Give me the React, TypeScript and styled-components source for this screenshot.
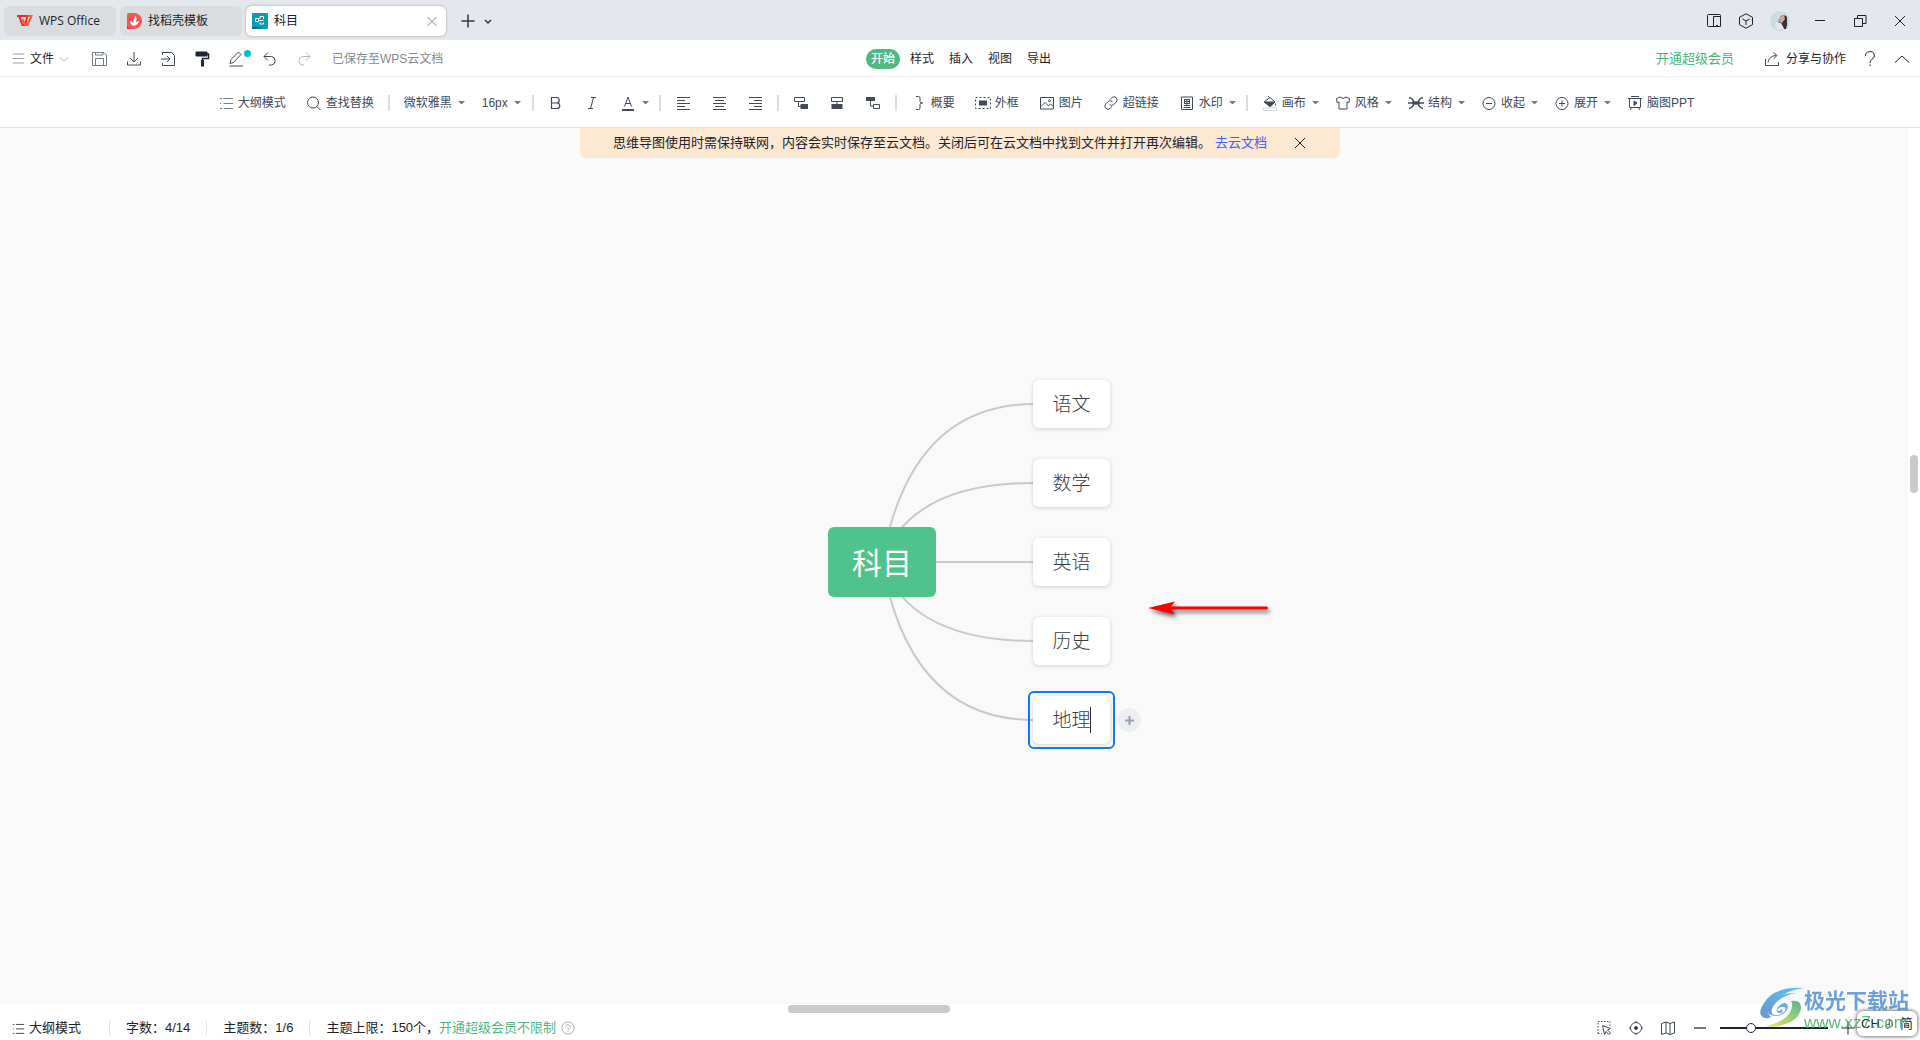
import React from 'react';
import styled, { createGlobalStyle, css } from 'styled-components';

const latin = '"Liberation Sans", "Noto Sans CJK SC", sans-serif';
const ui = '"Open Sans", "Noto Sans CJK SC", sans-serif';

const Global = createGlobalStyle`
  *, *::before, *::after { box-sizing: border-box; }
  body { margin: 0; font-family: ${latin}; font-size: 12px; line-height: 16px; color: #1f2329; background: #fff; overflow: hidden; }
  button, input, select { font: inherit; color: inherit; border: 0; padding: 0; margin: 0; background: none; outline: 0; }
  a { text-decoration: none; }
  svg { display: block; flex: none; }
`;

const Page = styled.div`
  display: flex;
  flex-direction: column;
  height: 100vh;
`;

/* ---------- title bar ---------- */
const TitleBar = styled.header`
  display: flex;
  align-items: center;
  justify-content: space-between;
  height: 40px;
  padding: 2px 12px 0 4px;
  background: #e4e7eb;
  font-family: ${ui};
`;
const Tabs = styled.nav`
  display: flex;
  align-items: center;
  gap: 4px;
`;
const Tab = styled.div<{ $w: number; $active?: boolean; $pad: number }>`
  display: flex;
  align-items: center;
  gap: 6px;
  width: ${p => p.$w}px;
  height: 30px;
  padding: 0 ${p => p.$pad}px;
  border-radius: 6px;
  background: ${p => (p.$active ? '#fff' : '#d9dddf')};
  box-shadow: ${p => (p.$active ? '0 0 3px rgba(0, 0, 0, 0.3)' : 'none')};
`;
const TabLabel = styled.button`
  display: flex;
  align-items: center;
  flex: 1;
  gap: 6px;
  white-space: nowrap;
`;
const IconButton = styled.button<{ $size?: number }>`
  display: flex;
  align-items: center;
  justify-content: center;
  position: relative;
  width: ${p => p.$size ?? 16}px;
  height: ${p => p.$size ?? 16}px;
`;
const TabTools = styled.div`
  display: flex;
  align-items: center;
  gap: 4px;
  padding-left: 10px;
`;
const WindowTools = styled.div<{ $gap: number }>`
  display: flex;
  align-items: center;
  gap: ${p => p.$gap}px;
`;
const WindowGroup = styled.div`
  display: flex;
  align-items: center;
  gap: 22px;
`;

/* ---------- menu row ---------- */
const MenuRow = styled.div`
  display: grid;
  grid-template-columns: 1fr auto 1fr;
  align-items: center;
  height: 37px;
  padding: 1px 10px 0 12px;
  border-bottom: 1px solid #f0f0f0;
`;
const FileButton = styled.button`
  display: flex;
  align-items: center;
  gap: 5px;
  margin-right: 23px;
`;
const MenuLeft = styled.div`
  display: flex;
  align-items: center;
`;
const QuickTools = styled.div`
  display: flex;
  gap: 18px;
  margin-right: 20px;
`;
const SavedNote = styled.span`
  color: #85888d;
`;
const MenuTabs = styled.nav`
  display: flex;
  gap: 5px;
`;
const MenuTab = styled.button<{ $on?: boolean }>`
  height: 20px;
  padding: 0 5px;
  border-radius: 10px;
  ${p => p.$on && css`
    background: #4fb883;
    color: #fff;
    font-weight: 500;
  `}
`;
const MenuRight = styled.div`
  display: flex;
  align-items: center;
  justify-content: flex-end;
  gap: 16px;
`;
const VipLink = styled.a`
  margin-right: 14px;
  font-size: 13px;
  color: #47b57c;
`;
const ShareButton = styled.button`
  display: flex;
  align-items: center;
  gap: 6px;
`;
const PenBadge = styled.span`
  position: absolute;
  right: -7px;
  top: -1px;
  width: 7px;
  height: 7px;
  border-radius: 50%;
  background: #00bfc0;
`;

/* ---------- tool bar ---------- */
const ToolBar = styled.div`
  display: flex;
  align-items: center;
  justify-content: center;
  height: 51px;
  padding: 1px 8px 0 0;
  border-bottom: 1px solid #e2e3e5;
  color: #414a5a;
  white-space: nowrap;
`;
const Tool = styled.button<{ $menu?: boolean }>`
  display: flex;
  align-items: center;
  gap: 4px;
  height: 24px;
  padding: 0 ${p => (p.$menu ? 6 : 10)}px 0 10px;
`;
const CaretMark = styled.span`
  width: 7px;
  margin-left: 2px;
  border: solid transparent;
  border-width: 3px 3px 0;
  border-top-color: #737b87;
`;
const Divider = styled.span`
  width: 2px;
  height: 16px;
  margin: 0 4px;
  background: #dcdde0;
`;
const SelectBox = styled.label<{ $w: number }>`
  display: flex;
  align-items: center;
  gap: 4px;
  padding: 0 7px 0 10px;
  select {
    width: ${p => p.$w}px;
    appearance: none;
  }
`;

/* ---------- canvas ---------- */
const CanvasRow = styled.main`
  display: flex;
  flex: 1;
  min-height: 0;
`;
const Canvas = styled.section`
  position: relative;
  display: flex;
  flex: 1;
  align-items: center;
  justify-content: center;
  padding: 0 0 8px 30px;
  background: #f9f9f9;
`;
const VerticalGutter = styled.div`
  display: flex;
  justify-content: flex-end;
  align-items: flex-start;
  width: 12px;
  padding: 327px 2px 0 0;
`;
const Thumb = styled.span<{ $w: number; $h: number }>`
  width: ${p => p.$w}px;
  height: ${p => p.$h}px;
  border-radius: 4px;
  background: #cacaca;
`;
const Banner = styled.div`
  position: absolute;
  top: 0;
  left: calc(50% - 374px);
  display: flex;
  align-items: center;
  width: 760px;
  height: 30px;
  padding: 0 33px;
  border-radius: 0 0 5px 5px;
  background: #fde8d1;
  font-size: 13px;
  white-space: nowrap;
  a { margin: 0 25px 0 4px; color: #3b63f5; }
`;
const MindMap = styled.div`
  position: relative;
  display: flex;
  align-items: center;
  gap: 97px;
`;
const RootNode = styled.div`
  position: relative;
  display: flex;
  align-items: center;
  justify-content: center;
  width: 108px;
  height: 70px;
  padding-top: 4px;
  border-radius: 6px;
  background: #50c28b;
  color: #fff;
  font-size: 30px;
  line-height: 40px;
`;
const Branches = styled.ul`
  position: relative;
  display: flex;
  flex-direction: column;
  gap: 31px;
  margin: 0;
  padding: 0;
  list-style: none;
`;
const Node = styled.li<{ $selected?: boolean }>`
  position: relative;
  display: flex;
  align-items: center;
  justify-content: center;
  width: 77px;
  height: 48px;
  padding-top: 2px;
  border-radius: 6px;
  background: #fff;
  box-shadow: 0 1px 4px rgba(0, 0, 0, 0.16);
  color: #3a3d42;
  font-size: 19px;
  line-height: 28px;
  font-weight: 300;
  ${p => p.$selected && css`
    &::before {
      content: '';
      position: absolute;
      inset: -5px;
      border: 2px solid #0b7cf0;
      border-radius: 6px;
    }
  `}
`;
const NodeInput = styled.input`
  width: 38px;
  height: 28px;
`;
const TextCursor = styled.span`
  position: absolute;
  left: 57px;
  top: 11px;
  width: 1px;
  height: 26px;
  background: #333;
`;
const AddChild = styled.button`
  position: absolute;
  left: 84px;
  top: 12px;
  display: flex;
  align-items: center;
  justify-content: center;
  width: 24px;
  height: 24px;
  border-radius: 50%;
  background: #edeef3;
  color: #98a1b5;
`;
const Links = styled.svg`
  position: absolute;
  left: 0;
  top: 0;
`;
const Pointer = styled.svg`
  position: absolute;
  left: 316px;
  top: 216px;
  filter: drop-shadow(2px 3px 2px rgba(0, 0, 0, 0.6));
`;

/* ---------- footer ---------- */
const Footer = styled.footer`
  position: relative;
  display: flex;
  flex-direction: column;
  align-items: center;
  height: 36px;
  padding-top: 1px;
`;
const HorizontalThumb = styled(Thumb)`
  flex: none;
  margin-right: 182px;
`;
const StatusRow = styled.div`
  display: flex;
  align-items: center;
  justify-content: space-between;
  width: 100%;
  height: 26px;
  margin-top: 3px;
  padding: 0 64px 0 12px;
  font-size: 13px;
`;
const Status = styled.div`
  display: flex;
  align-items: center;
`;
const StatusItem = styled.span<{ $first?: boolean }>`
  display: flex;
  align-items: center;
  padding: 0 ${p => (p.$first ? 28 : 16)}px 0 ${p => (p.$first ? 0 : 16)}px;
  & + & { border-left: 1px solid #e0e1e3; line-height: 14px; }
  a { color: #4fb883; }
  a + button { margin-left: 4px; }
`;
const OutlineButton = styled.button`
  display: flex;
  align-items: center;
  gap: 4px;
`;
const ViewTools = styled.div`
  display: flex;
  align-items: center;
  gap: 16px;
`;
const ZoomTools = styled.div`
  display: flex;
  align-items: center;
  gap: 12px;
`;
const ZoomSlider = styled.input`
  appearance: none;
  width: 108px;
  height: 12px;
  background: linear-gradient(#1c2433, #1c2433) center / 100% 2px no-repeat;
  &::-webkit-slider-thumb {
    appearance: none;
    width: 10px;
    height: 10px;
    border: 1px solid #1c2433;
    border-radius: 50%;
    background: #fff;
  }
`;
const InputMethod = styled.div`
  position: absolute;
  right: 3px;
  bottom: 4px;
  display: flex;
  align-items: center;
  justify-content: center;
  gap: 4px;
  width: 60px;
  height: 25px;
  border-radius: 6px;
  background: #fff;
  box-shadow: 0 0 4px rgba(0, 0, 0, 0.8);
  font-size: 13px;
  color: #222;
`;
const Watermark = styled.div`
  position: absolute;
  right: 11px;
  bottom: 6px;
  display: flex;
  align-items: flex-start;
  opacity: 0.85;
`;
const WatermarkText = styled.div`
  display: flex;
  flex-direction: column;
  padding-top: 4px;
  color: #5591d0;
  font-size: 21px;
  line-height: 22px;
  font-weight: 700;
  white-space: nowrap;
`;
const WatermarkSite = styled.span`
  color: #45ae62;
  font-size: 17px;
  line-height: 22px;
  font-weight: 400;
`;

/* ---------- drawings ---------- */
type IconProps = { children: React.ReactNode; s?: number; w?: number; c?: string };
const Icon = ({ children, s = 16, w = 1, c = 'currentColor' }: IconProps) => (
  <svg width={s} height={s} viewBox="0 0 16 16" fill="none" stroke={c} strokeWidth={w} aria-hidden="true">
    {children}
  </svg>
);

const ListIcon = () => (
  <Icon c="#737b87"><path d="M5.5 3.5H15M5.5 8.5H15M5.5 13.5H15" /><path d="M2 3.5h2M2 8.5h1M2 13.5h2" /></Icon>
);
const alignPath = {
  left: 'M2 2.500h13M2 5.500h8M2 8.500h13M2 11.500h8M2 14.500h13',
  center: 'M2 2.500h13M4 5.500h9M2 8.500h13M4 11.500h9M2 14.500h13',
  right: 'M2 2.500h13M7 5.500h8M2 8.500h13M7 11.500h8M2 14.500h13',
};

type ToolSpec = { label: string; text?: string; menu?: boolean; icon: React.ReactNode };

const textTools: ToolSpec[] = [
  { label: '加粗', icon: <Icon w={1.2}><path d="M3.500 2.500h5a2.500 2.500 0 0 1 0 5.500h-5zM3.500 8h5.500a2.700 2.700 0 0 1 0 5.500H3.500z" /></Icon> },
  { label: '斜体', icon: <Icon><path d="M7 2.500h5M4 13.500h5M9.500 2.500l-3 11" /></Icon> },
  { label: '字体颜色', menu: true, icon: <Icon><path d="M4.500 11.500L8 2l3.500 9.500M5.700 8.500h4.600" /><path d="M2 15h12" strokeWidth="2" /></Icon> },
];
const alignTools: ToolSpec[] = [
  { label: '左对齐', icon: <Icon><path d={alignPath.left} /></Icon> },
  { label: '居中对齐', icon: <Icon><path d={alignPath.center} /></Icon> },
  { label: '右对齐', icon: <Icon><path d={alignPath.right} /></Icon> },
];
const topicTools: ToolSpec[] = [
  { label: '插入子主题', icon: <Icon><path d="M1.500 2.500h10v4h-10zM5.500 6.500v5H8" /><rect x="8" y="9.500" width="6.500" height="4" fill="currentColor" /></Icon> },
  { label: '插入同级主题', icon: <Icon><path d="M2.500 2.500h11v4h-11zM8 6.500v3" /><rect x="3" y="9.500" width="10" height="4" fill="currentColor" /></Icon> },
  { label: '插入父主题', icon: <Icon><rect x="1.500" y="2.500" width="8" height="3" fill="currentColor" /><path d="M5.500 6v5H8M8.500 9.500h6v4h-6z" /></Icon> },
];
const insertTools: ToolSpec[] = [
  { label: '概要', text: '概要', icon: <Icon><path d="M5 1.500h2.500q1.500 0 1.500 1.500v3.500q0 1.500 2.500 1.500-2.500 0-2.500 1.500V13q0 1.500-1.500 1.500H5" /></Icon> },
  { label: '外框', text: '外框', icon: <Icon><path d="M.5 2.500h15v11H.5z" strokeDasharray="2 2" /><rect x="4.500" y="6" width="7" height="4" fill="currentColor" /></Icon> },
  { label: '图片', text: '图片', icon: <Icon><path d="M1.500 2.500h13v11.500h-13z" /><path d="M2 11.500l4-4 3.500 3.500 2-2 3 2.500" /><circle cx="10.500" cy="5.700" r="1" /></Icon> },
  { label: '超链接', text: '超链接', icon: <Icon><path d="M7 4.500l1.800-1.800a3.100 3.100 0 0 1 4.400 4.400L10.800 9.500a3 3 0 0 1-4.200 0" /><path d="M9 11.500l-1.800 1.800a3.100 3.100 0 0 1-4.400-4.400L5.200 6.500a3 3 0 0 1 4.200 0" /></Icon> },
  { label: '水印', text: '水印', menu: true, icon: <Icon><path d="M2.500 2h11v12.500h-11z" /><path d="M5 4.500h6M5 6.500h6M5 8.500h6M5 10.500h6M4.500 12.500h7M8 4.500v6M5.500 4.500v4M10.500 4.500v4" /></Icon> },
];
const styleTools: ToolSpec[] = [
  { label: '画布', text: '画布', menu: true, icon: <Icon><path d="M2.500 6.500L8 2.500l5 4.500-5 4.500z" /><path d="M2 7h11L8 11.500z" fill="currentColor" /><path d="M6 1l2 2M13.500 8.500v2" /><rect x="1.500" y="13" width="13" height="2.500" stroke="#d5d9e0" /></Icon> },
  { label: '风格', text: '风格', menu: true, icon: <Icon><path d="M5 2L1.500 3.500 2 7.500l2-.5v7h8V7l2 .5.5-4L11 2Q8 5 5 2z" /></Icon> },
  { label: '结构', text: '结构', menu: true, icon: <Icon w={1.3}><path d="M1 2.500q4 1 5 5M15 2.500q-4 1-5 5M1 13.500q4-1 5-5M15 13.500q-4-1-5-5M0 8h16" /><rect x="5" y="7" width="6" height="2" fill="currentColor" /></Icon> },
  { label: '收起', text: '收起', menu: true, icon: <Icon><circle cx="8" cy="8.500" r="6" /><path d="M5 8.500h6" /></Icon> },
  { label: '展开', text: '展开', menu: true, icon: <Icon><circle cx="8" cy="8.500" r="6" /><path d="M5 8.500h6M8 5.500v6" /></Icon> },
  { label: '脑图PPT', text: '脑图PPT', icon: <Icon><path d="M4 1.500h8M1 3.500h14M2.500 3.500v9h11v-9M4.500 12.500L3 15M11.500 12.500L13 15" /><path d="M7 6l3 2-3 2.500z" fill="currentColor" /></Icon> },
];

const ToolSet = ({ tools }: { tools: ToolSpec[] }) => (
  <>
    {tools.map(t => (
      <Tool key={t.label} $menu={t.menu} aria-label={t.label}>
        {t.icon}
        {t.text}
        {t.menu && <CaretMark />}
      </Tool>
    ))}
  </>
);

const PlusIcon = ({ s = 16, w = 1 }: { s?: number; w?: number }) => <Icon s={s} w={w}><path d="M8 1.500v13M1.500 8h13" /></Icon>;
const CloseIcon = () => <Icon><path d="M3 3l10 10M13 3L3 13" /></Icon>;

const subjects = ['语文', '数学', '英语', '历史'];

export default function App() {
  return (
    <Page>
      <Global />
      <TitleBar>
        <Tabs>
          <Tab $w={112} $pad={13}>
            <TabLabel>
              <svg width="16" height="12" viewBox="0 0 16 12" fill="none" strokeWidth="2">
                <path d="M0 1h10.500L8 10H5.500L2 1" stroke="#f0282d" />
                <path d="M5.500 4L8 10h2.500L14.500 1H11" stroke="#fa5a32" />
              </svg>
              WPS Office
            </TabLabel>
          </Tab>
          <Tab $w={122} $pad={7}>
            <TabLabel>
              <svg width="15" height="16" viewBox="0 0 15 16">
                <path d="M0 2q0-2 2-2h5a8 8 0 0 1 0 16H2q-2 0-2-2z" fill="#f25658" />
                <path d="M0 13l2.500 3H0z" fill="#b92e35" />
                <path d="M6.500 13Q3 11.500 3.200 7.500q2.300.8 3 3Q6 6 8.500 3q2 3 0 6.500 1.500-1.500 3.500-1.500-.8 4-5.500 5z" fill="#fff" />
              </svg>
              找稻壳模板
            </TabLabel>
          </Tab>
          <Tab $w={200} $pad={6} $active>
            <TabLabel>
              <svg width="16" height="16" viewBox="0 0 16 16" fill="none">
                <rect width="16" height="16" rx="1" fill="#0a9bb0" />
                <path d="M0 14h8l2 2H0z" fill="#08758a" />
                <path d="M3.500 5.500h3v3h-3zM6.500 7.500H11.500M8 3.500H11.500V6M8 3.500V6M8 9.500v1.500h3.500V9.500" stroke="#fff" />
              </svg>
              科目
            </TabLabel>
            <IconButton aria-label="关闭标签"><Icon c="#8b8e92"><path d="M3.500 4l9 9M12.500 4l-9 9" /></Icon></IconButton>
          </Tab>
          <TabTools>
            <IconButton aria-label="新建标签"><Icon w={1.5} c="#33373c"><path d="M8 1.500v13M1.500 8h13" /></Icon></IconButton>
            <IconButton aria-label="标签列表"><Icon w={1.5} c="#33373c"><path d="M5 7l3 3 3-3" /></Icon></IconButton>
          </TabTools>
        </Tabs>
        <WindowGroup>
          <WindowTools $gap={16}>
            <IconButton aria-label="侧栏"><Icon><path d="M2.500 1.500h11a1 1 0 0 1 1 1v11h-12a1 1 0 0 1-1-1v-10a1 1 0 0 1 1-1zM7.500 14V3.500h7M10 12.500h2" /></Icon></IconButton>
            <IconButton aria-label="应用"><Icon><path d="M8 .8l6.500 3.500v7.400L8 15.200l-6.500-3.500V4.300zM4.500 6L8 8l3.500-2M8 8v4" /></Icon></IconButton>
            <IconButton $size={20} aria-label="账号">
              <svg width="20" height="20" viewBox="0 0 20 20">
                <circle cx="10" cy="10" r="10" fill="#cbdbdf" />
                <path d="M11 5q4-2 6 1l0 8-1 4h-2l-2-4-4-1 1-4z" fill="#35303c" />
                <path d="M10 6l4-2 1 4-3 4-3-1z" fill="#d4a49e" />
                <path d="M6 11l5 1 3 6-6 1-3-3z" fill="#e3e8ea" />
              </svg>
            </IconButton>
          </WindowTools>
          <WindowTools $gap={24}>
            <IconButton aria-label="最小化"><Icon><path d="M3 7.500h10" /></Icon></IconButton>
            <IconButton aria-label="还原"><Icon><path d="M2.500 5.500h8v8h-8zM5.500 5V2.500h8.500v8h-3" /></Icon></IconButton>
            <IconButton aria-label="关闭窗口"><CloseIcon /></IconButton>
          </WindowTools>
        </WindowGroup>
      </TitleBar>

      <MenuRow>
        <MenuLeft>
          <FileButton>
            <Icon s={13} c="#85898f"><path d="M1 2.500h14M1 8h14M1 13.500h14" /></Icon>
            文件
            <Icon s={10} c="#85898f"><path d="M1 5l7 7 7-7" /></Icon>
          </FileButton>
          <QuickTools>
            <IconButton aria-label="保存"><Icon c="#737b87"><path d="M.5 1.500h11.500l2.500 2.500v10.500H.5zM3.500 14V7.500h8V14M3.500 1.500V4h7.500V1.500" /></Icon></IconButton>
            <IconButton aria-label="下载"><Icon c="#414a5a"><path d="M8 1v10M4 7l4 4 4-4M1.500 10.500v3.500h13v-3.500" /></Icon></IconButton>
            <IconButton aria-label="导入"><Icon c="#414a5a"><path d="M2.500 4V1.500h9l3 3v10h-12V12M1 8h8.500M7 5l3 3-3 3" /></Icon></IconButton>
            <IconButton aria-label="格式刷"><Icon c="#1f2733"><path d="M2 1h11v4H2z" fill="#1f2733" /><path d="M13 3h1.500v4.500H8.500V15" strokeWidth="1.500" /><path d="M8.500 9v6.500" strokeWidth="3" /></Icon></IconButton>
            <IconButton aria-label="画笔">
              <Icon c="#414a5a"><path d="M2 12.500l1-4L10.500 1l2.500 2.500-7.500 8zM1.500 15h13.500" /></Icon>
              <PenBadge />
            </IconButton>
            <IconButton aria-label="撤销"><Icon c="#414a5a"><path d="M6 1.500L2 5.500l4 4M2 5.500h7.500a4.300 4.300 0 0 1 0 8.500H7" /></Icon></IconButton>
            <IconButton aria-label="重做"><Icon c="#b5b8bd"><path d="M10 1.500l4 4-4 4M14 5.500H6.500a4.300 4.300 0 0 0 0 8.500H8" /></Icon></IconButton>
          </QuickTools>
          <SavedNote>已保存至WPS云文档</SavedNote>
        </MenuLeft>
        <MenuTabs>
          <MenuTab $on>开始</MenuTab>
          <MenuTab>样式</MenuTab>
          <MenuTab>插入</MenuTab>
          <MenuTab>视图</MenuTab>
          <MenuTab>导出</MenuTab>
        </MenuTabs>
        <MenuRight>
          <VipLink href="#vip">开通超级会员</VipLink>
          <ShareButton>
            <Icon c="#414a5a"><path d="M1.500 8v6.500h13V11M4 11.500Q5 5 12 4.500M9.500 1.500l3.500 3-3.500 3.500" /></Icon>
            分享与协作
          </ShareButton>
          <IconButton aria-label="帮助"><Icon><path d="M3.500 5a4.500 4 0 1 1 6.500 3.200Q8 9.500 8 12M8 13.500V15" /></Icon></IconButton>
          <IconButton aria-label="收起功能区"><Icon><path d="M1 11.500L8 5l7 6.500" /></Icon></IconButton>
        </MenuRight>
      </MenuRow>

      <ToolBar>
        <Tool><ListIcon />大纲模式</Tool>
        <Tool><Icon><circle cx="7" cy="7.500" r="5.500" /><path d="M11 11.500l3.500 3.500" /></Icon>查找替换</Tool>
        <Divider />
        <SelectBox $w={48}>
          <select aria-label="字体"><option>微软雅黑</option></select>
          <CaretMark />
        </SelectBox>
        <SelectBox $w={26}>
          <select aria-label="字号"><option>16px</option></select>
          <CaretMark />
        </SelectBox>
        <Divider />
        <ToolSet tools={textTools} />
        <Divider />
        <ToolSet tools={alignTools} />
        <Divider />
        <ToolSet tools={topicTools} />
        <Divider />
        <ToolSet tools={insertTools} />
        <Divider />
        <ToolSet tools={styleTools} />
      </ToolBar>

      <CanvasRow>
        <Canvas>
          <Banner>
            思维导图使用时需保持联网，内容会实时保存至云文档。关闭后可在云文档中找到文件并打开再次编辑。
            <a href="#cloud">去云文档</a>
            <IconButton aria-label="关闭提示"><CloseIcon /></IconButton>
          </Banner>
          <MindMap>
            <Links width="282" height="364" viewBox="0 0 282 364" fill="none" stroke="#cacaca" strokeWidth="2">
              {[24, 103, 182, 261, 340].map(y => <path key={y} d={`M54 182Q82 ${y} 206 ${y}`} />)}
            </Links>
            <RootNode>科目</RootNode>
            <Branches>
              {subjects.map(s => <Node key={s}>{s}</Node>)}
              <Node $selected>
                <NodeInput aria-label="主题" defaultValue="地理" />
                <TextCursor />
                <AddChild aria-label="添加子主题"><PlusIcon s={11} w={3} /></AddChild>
              </Node>
            </Branches>
            <Pointer width="130" height="24" viewBox="0 0 130 24">
              <path d="M4 12L31 5.500l-4 5h96q2 1.500 0 3H27l4 5z" fill="#f00" />
            </Pointer>
          </MindMap>
        </Canvas>
        <VerticalGutter><Thumb $w={8} $h={38} /></VerticalGutter>
      </CanvasRow>

      <Footer>
        <HorizontalThumb $w={162} $h={8} />
        <StatusRow>
          <Status>
            <StatusItem $first>
              <OutlineButton>
                <Icon s={13}><path d="M5 3H15M5 8.500H15M5 14H15M1 3h2M1 8.500h1M1 14h2" /></Icon>
                大纲模式
              </OutlineButton>
            </StatusItem>
            <StatusItem>字数：4/14</StatusItem>
            <StatusItem>主题数：1/6</StatusItem>
            <StatusItem>
              主题上限：150个，<a href="#vip">开通超级会员不限制</a>
              <IconButton aria-label="说明"><Icon s={14} c="#9da2ab"><circle cx="8" cy="8" r="7" /><path d="M5.700 6.500a2.300 2.300 0 1 1 3.500 2Q8 9 8 10M8 11v1.500" /></Icon></IconButton>
            </StatusItem>
          </Status>
          <ViewTools>
            <IconButton aria-label="框选"><Icon c="#414a5a"><path d="M2 13.500V1.500h12V6M2 13.500h4" strokeDasharray="1.500 1.500" /><path d="M6.500 5.500l8 3-3 1.500 3 3-1.500 1.500-3-3-1.500 3z" /></Icon></IconButton>
            <IconButton aria-label="定位"><Icon c="#414a5a"><circle cx="8" cy="8" r="5.500" /><circle cx="8" cy="8" r="1.500" fill="#1c2433" /><path d="M8 1v2M8 13v2M1 8h2M13 8h2" /></Icon></IconButton>
            <IconButton aria-label="导航图"><Icon c="#414a5a"><path d="M1.500 3.500L6 2l4 1.500L14.500 2v11L10 14.500 6 13l-4.500 1.500zM6 2v11M10 3.500v11" /></Icon></IconButton>
            <ZoomTools>
              <IconButton aria-label="缩小"><Icon c="#737b87" w={2}><path d="M2 8h12" /></Icon></IconButton>
              <ZoomSlider type="range" aria-label="缩放" min="0" max="100" defaultValue="27" />
              <IconButton aria-label="放大"><PlusIcon /></IconButton>
            </ZoomTools>
          </ViewTools>
        </StatusRow>
        <InputMethod>
          <span>CH</span>
          <Icon s={12}><path d="M7 1v9a2.500 2.500 0 1 1-3-1l3-1M7 2q6 3 4 9" /></Icon>
          <span>简</span>
        </InputMethod>
        <Watermark>
          <svg width="44" height="42" viewBox="0 0 44 42">
            <defs>
              <linearGradient id="sky" x1="0" y1="1" x2="1" y2="0"><stop offset="0" stopColor="#5482cf" /><stop offset="1" stopColor="#43bdec" /></linearGradient>
              <linearGradient id="leaf" x1="0" y1="1" x2="1" y2="0"><stop offset="0" stopColor="#e5e74e" /><stop offset="1" stopColor="#38a976" /></linearGradient>
            </defs>
            <path d="M44 2Q14 0 4 17q-8 12 1 15 3 1 6-1-6-4 2-14Q23 5 44 2z" fill="url(#sky)" />
            <path d="M37 7q-15 2-23 12-5 8 0 10 6 1 11-4 2-5-4-4-5 2-3 4 3 0 4-2 2 4-3 4-5-2 0-7 5-5 8-2 3 5-4 10-7 4-14 0-5-9 7-17 7-4 21-4z" fill="url(#sky)" />
            <path d="M31 15q10-2 10 7-2 13-19 17-8 3-16 1 16-3 23-12 5-8 2-13z" fill="url(#leaf)" />
          </svg>
          <WatermarkText>
            极光下载站
            <WatermarkSite>www.xz7.com</WatermarkSite>
          </WatermarkText>
        </Watermark>
      </Footer>
    </Page>
  );
}
